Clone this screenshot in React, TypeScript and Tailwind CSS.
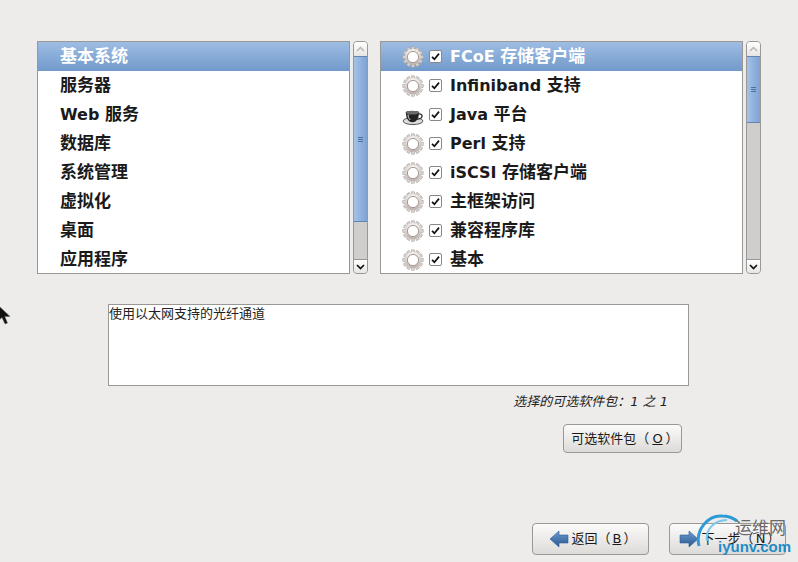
const FONT = "font-['DejaVu_Sans','Noto_Sans_CJK_SC',sans-serif]";

const groups = ["基本系统", "服务器", "Web 服务", "数据库", "系统管理", "虚拟化", "桌面", "应用程序"];

const packages: { name: string; icon: "gear" | "java" }[] = [
  { name: "FCoE 存储客户端", icon: "gear" },
  { name: "Infiniband 支持", icon: "gear" },
  { name: "Java 平台", icon: "java" },
  { name: "Perl 支持", icon: "gear" },
  { name: "iSCSI 存储客户端", icon: "gear" },
  { name: "主框架访问", icon: "gear" },
  { name: "兼容程序库", icon: "gear" },
  { name: "基本", icon: "gear" },
];

// latin runs sit at 16px, the CJK glyphs come out a pixel bigger
function Label({ text }: { text: string }) {
  return (
    <span>
      {text.split(/([\u4e00-\u9fff]+)/).map((part, i) =>
        i % 2 === 1 ? (
          <span key={i} className="text-[17px]">
            {part}
          </span>
        ) : (
          <span key={i}>{part}</span>
        )
      )}
    </span>
  );
}

function GearIcon() {
  const teeth = Array.from({ length: 12 }, (_, i) => i * 30);
  return (
    <svg width="22" height="22" viewBox="0 0 22 22">
      <defs>
        <linearGradient id="gearFill" x1="0" y1="0" x2="0" y2="1">
          <stop offset="0" stopColor="#f4f2f0" />
          <stop offset="1" stopColor="#bdb1ac" />
        </linearGradient>
      </defs>
      {teeth.map((a) => (
        <rect key={a} x="9.4" y="0.8" width="3.2" height="4" fill="#d8d2ce" stroke="#a89e9a" strokeWidth="0.5" transform={`rotate(${a} 11 11)`} />
      ))}
      <circle cx="11" cy="11" r="8" fill="url(#gearFill)" />
      <circle cx="11" cy="11" r="5.6" fill="#ffffff" stroke="#a0928d" strokeWidth="0.9" />
    </svg>
  );
}

function JavaIcon() {
  return (
    <svg width="22" height="22" viewBox="0 1 20 20">
      <ellipse cx="10" cy="16.5" rx="9" ry="3.2" fill="#dcdcdc" stroke="#444" strokeWidth="0.8" />
      <path d="M3.5 8.5 C3.5 7 15.5 7 15.5 8.5 C15.5 13.5 13.5 17.5 9.5 17.5 C5.5 17.5 3.5 13.5 3.5 8.5 Z" fill="#222" />
      <ellipse cx="9.5" cy="8.8" rx="6" ry="1.7" fill="#6b6b6b" />
      <path d="M15 10 C19.5 9.5 19.5 14.5 13.5 15" fill="none" stroke="#333" strokeWidth="1.3" />
      <path d="M5.5 10.5 C5.5 12.5 6.2 14.5 7.5 15.5" fill="none" stroke="#ddd" strokeWidth="0.9" />
    </svg>
  );
}

function CheckBox() {
  return (
    <span className="w-[13px] h-[13px] rounded-[2px] border border-[#8a8886] bg-white flex items-center justify-center shrink-0">
      <svg width="9" height="9" viewBox="0 0 9 9">
        <path d="M1 4.8 L3.4 7.2 L8 1.6" fill="none" stroke="#111" strokeWidth="1.7" />
      </svg>
    </span>
  );
}

function Scrollbar({ thumbHeight }: { thumbHeight: number }) {
  return (
    <div className="w-[15px] h-[233px] flex flex-col rounded-[4px] border border-[#9a9896] bg-[#cfcecd] overflow-hidden">
      <div className="h-[14px] shrink-0 bg-gradient-to-b from-white to-[#e6e5e3] flex items-center justify-center">
        <svg width="9" height="6" viewBox="0 0 9 6">
          <path d="M1 5 L4.5 1.5 L8 5" fill="none" stroke="#b9b8b6" strokeWidth="1.5" />
        </svg>
      </div>
      <div
        className="shrink-0 border-y border-[#5f86b5] bg-gradient-to-r from-[#a5c2e8] to-[#7ea2d3] flex flex-col items-center justify-center gap-[1px]"
        style={{ height: thumbHeight }}
      >
        <div className="w-[5px] h-[1px] bg-[#4a6fa0]" />
        <div className="w-[5px] h-[1px] bg-[#4a6fa0]" />
        <div className="w-[5px] h-[1px] bg-[#4a6fa0]" />
      </div>
      <div className="flex-1" />
      <div className="h-[14px] shrink-0 bg-gradient-to-b from-white to-[#e6e5e3] border-t border-[#9a9896] flex items-center justify-center">
        <svg width="9" height="6" viewBox="0 0 9 6">
          <path d="M1 1 L4.5 4.5 L8 1" fill="none" stroke="#111" strokeWidth="1.7" />
        </svg>
      </div>
    </div>
  );
}

function Row({ selected, children }: { selected: boolean; children: React.ReactNode }) {
  return (
    <div
      className={`h-[29px] flex items-center text-[16px] font-bold ${
        selected ? "bg-gradient-to-b from-[#9ebde3] to-[#719acb] text-white" : "text-[#1a1a1a]"
      }`}
    >
      {children}
    </div>
  );
}

function Arrow({ flip }: { flip?: boolean }) {
  return (
    <svg width="20" height="20" viewBox="0 0 20 20" className={flip ? "-scale-x-100" : ""}>
      <defs>
        <linearGradient id="arrowFill" x1="0" y1="0" x2="0" y2="1">
          <stop offset="0" stopColor="#6d9bd0" />
          <stop offset="1" stopColor="#27588f" />
        </linearGradient>
      </defs>
      <path d="M1 10 L10 2 L10 6 L19 6 L19 14 L10 14 L10 18 Z" fill="url(#arrowFill)" stroke="#2f5f96" strokeWidth="0.6" />
    </svg>
  );
}

function Button({ className, children }: { className: string; children: React.ReactNode }) {
  return (
    <div className={`rounded-[4px] border border-[#9a9896] bg-gradient-to-b from-[#fbfbfa] to-[#dddbd9] flex items-center justify-center text-[13px] text-[#1a1a1a] ${className}`}>
      {children}
    </div>
  );
}

export default function App() {
  return (
    <div className={`relative w-[798px] h-[562px] overflow-hidden bg-[#edeceb] pt-[41px] flex flex-col ${FONT}`}>
      <div className="flex pl-[37px]">
        <div className="w-[313px] h-[233px] border border-[#9a9896] bg-white overflow-hidden">
          {groups.map((g, i) => (
            <Row key={g} selected={i === 0}>
              <span className="pl-[22px]">
                <Label text={g} />
              </span>
            </Row>
          ))}
        </div>
        <div className="ml-[3px]">
          <Scrollbar thumbHeight={166} />
        </div>
        <div className="ml-[12px] w-[363px] h-[233px] border border-[#9a9896] bg-white overflow-hidden">
          {packages.map((p, i) => (
            <Row key={p.name} selected={i === 0}>
              <span className="ml-[21px] w-[22px] flex justify-center">
                {p.icon === "gear" ? <GearIcon /> : <JavaIcon />}
              </span>
              <span className="ml-[5px]">
                <CheckBox />
              </span>
              <span className="ml-[8px]">
                <Label text={p.name} />
              </span>
            </Row>
          ))}
        </div>
        <div className="ml-[3px]">
          <Scrollbar thumbHeight={67} />
        </div>
      </div>

      <div className="ml-[108px] mt-[30px] w-[581px] h-[82px] border border-[#9a9896] bg-white text-[13px] leading-[18px] text-[#222]">
        使用以太网支持的光纤通道
      </div>

      <div className="mt-[7px] w-[668px] text-right text-[13px] leading-[18px] italic text-[#222]">
        选择的可选软件包：1 之 1
      </div>

      <div className="mt-[13px] ml-[563px]">
        <Button className="w-[119px] h-[29px] pl-[5px]">
          <span>
            可选软件包（<u className="mx-[3px]">O</u>）
          </span>
        </Button>
      </div>

      <div className="mt-[70px] ml-[532px] flex gap-[20px]">
        <Button className="w-[117px] h-[32px] gap-[3px] pl-[4px]">
          <Arrow />
          <span>
            返回（<u className="mx-[2px]">B</u>）
          </span>
        </Button>
        <Button className="w-[117px] h-[32px] gap-[3px] pl-[4px]">
          <Arrow flip />
          <span>
            下一步（<u className="mx-[2px]">N</u>）
          </span>
        </Button>
      </div>

      {/* mouse pointer at the left edge */}
      <svg className="absolute left-[-3px] top-[304px]" width="14" height="24" viewBox="0 0 14 24">
        <path d="M1 1 L1 17 L5 13.5 L8 20 L10.5 19 L7.8 12.5 L13 12.5 Z" fill="#111" stroke="#666" strokeWidth="0.5" />
      </svg>

      {/* watermark */}
      <svg className="absolute left-[694px] top-[514px]" width="50" height="44" viewBox="0 0 50 44">
        <path d="M5 32 C1 16 14 1 28 2 C33 2 38 3 43 7" fill="none" stroke="#2c9bd6" strokeWidth="3" />
        <path d="M13 27 C11 16 20 6 33 6" fill="none" stroke="#7cc7ea" strokeWidth="2" />
      </svg>
      <div className="absolute left-[735px] top-[519px] text-[17px] leading-[18px] text-[#6a6a6a]">运维网</div>
      <div className="absolute left-[718px] top-[538px] text-[15px] leading-[18px] font-bold font-['Liberation_Sans',sans-serif] text-[#1f8cc8]">iyunv.com</div>
    </div>
  );
}
